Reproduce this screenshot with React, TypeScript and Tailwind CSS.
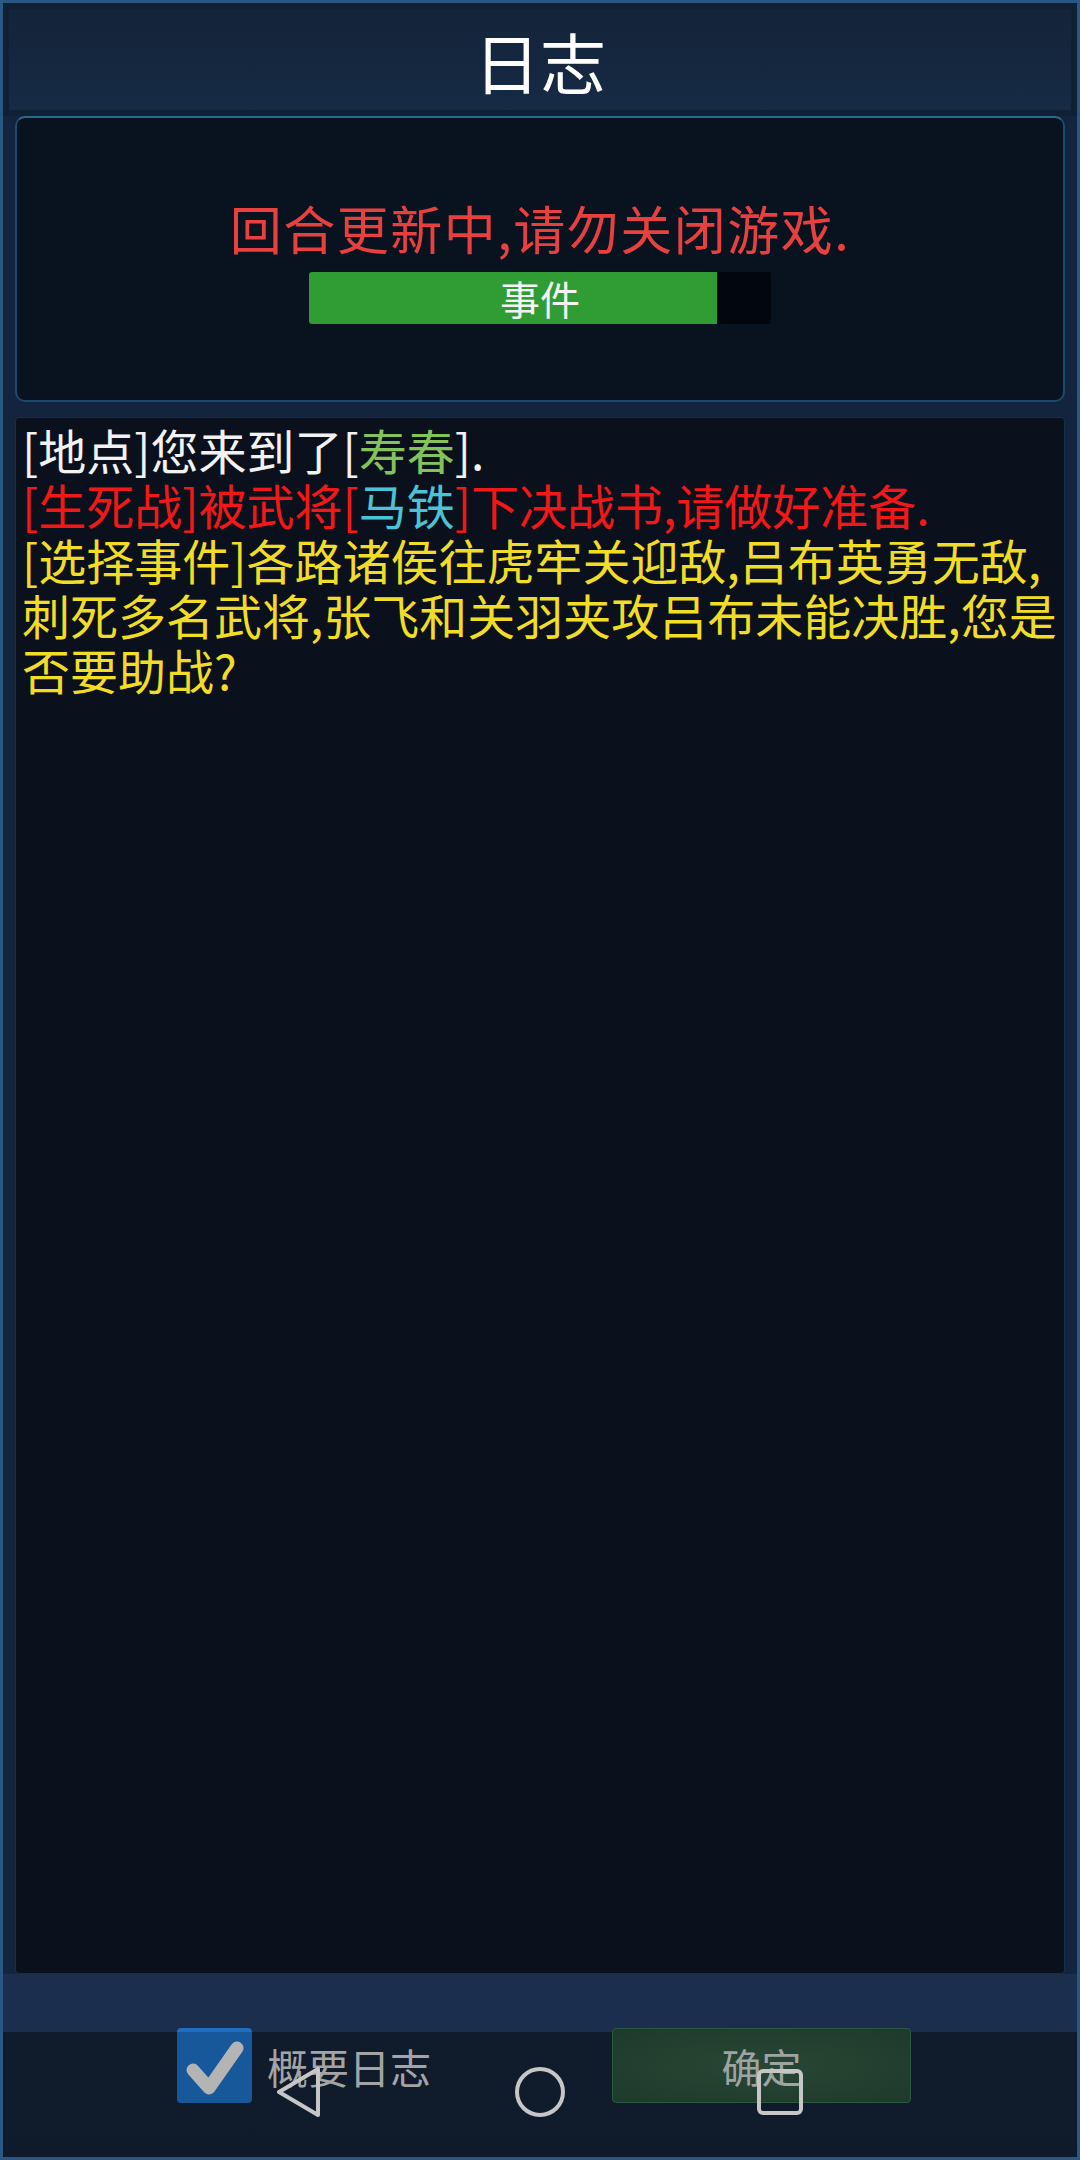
import React from "react";

const FONT = '"Noto Sans CJK SC", "Noto Sans", sans-serif';

export default function App() {
  return (
    <div
      className="relative w-[1080px] h-[2160px] overflow-hidden flex flex-col border-[3px] border-[#2b5883] bg-[#13253e]"
      style={{ fontFamily: FONT }}
    >
      {/* Header */}
      <div className="h-[113px] shrink-0 flex items-center justify-center bg-[linear-gradient(to_bottom,#132339,#172b45)] shadow-[inset_0_0_0_6px_#102035]">
        <span className="text-[66px] leading-none text-white">日志</span>
      </div>

      {/* Top panel */}
      <div className="mx-[12px] h-[286px] shrink-0 rounded-[10px] border-2 border-[#1c4a6c] border-t-[#2a6a8c] bg-[#08131f] flex flex-col items-center pt-[80px]">
        <div className="text-[52px] leading-[60px] tracking-[1.5px] text-[#e8403f]">回合更新中,请勿关闭游戏.</div>
        <div className="relative mt-[14px] w-[462px] h-[52px] bg-[#02070d] rounded-[3px] flex items-center justify-center">
          <div className="absolute left-0 top-0 bottom-0 w-[408px] rounded-l-[3px] bg-[#2f9d33]" />
          <span className="relative text-[40px] leading-[48px] text-[#f4f4f4]">事件</span>
        </div>
      </div>

      {/* Log panel */}
      <div className="mx-[12px] mt-[15px] h-[1557px] shrink-0 rounded-[4px] border border-[#15304a] bg-[#0a111c] pl-[6px] pt-[4px] text-[48px] leading-[55px]">
        <div className="text-[#f2f2f2]">
          [地点]您来到了[<span className="text-[#84c25a]">寿春</span>].
        </div>
        <div className="text-[#f21818]">
          [生死战]被武将[<span className="text-[#4cc2d6]">马铁</span>]下决战书,请做好准备.
        </div>
        <div className="text-[#f1dc26]">
          <div>[选择事件]各路诸侯往虎牢关迎敌,吕布英勇无敌,</div>
          <div>刺死多名武将,张飞和关羽夹攻吕布未能决胜,您是</div>
          <div>否要助战?</div>
        </div>
      </div>

      {/* Bottom controls */}
      <div className="flex-1 bg-[linear-gradient(to_bottom,#1b2e4d_0px,#1b2e4d_58px,#101b2c_58px,#0f1a2a_100%)] pt-[54px] flex items-start">
        <div className="ml-[174px] w-[75px] h-[75px] rounded-[4px] bg-[#17589a] border-t-[4px] border-[#1f6ec2] flex items-center justify-center">
          <svg width="60" height="60" viewBox="0 0 60 60">
            <path
              d="M8 32 L24 50 L52 10"
              fill="none"
              stroke="#b4b4b4"
              strokeWidth="13"
              strokeLinecap="round"
              strokeLinejoin="round"
            />
          </svg>
        </div>
        <span className="ml-[15px] mt-[14px] text-[41px] leading-[48px] text-[#a4a4a4]">概要日志</span>
        <div className="ml-[181px] w-[299px] h-[75px] rounded-[4px] border border-[#2b5a42] bg-[radial-gradient(ellipse_at_center,#294735,#1d3a2a)] flex items-center justify-center">
          <span className="text-[40px] leading-[48px] text-[#9ea4a2]">确定</span>
        </div>
      </div>

      {/* Android nav buttons overlay */}
      <div className="absolute left-0 right-0 bottom-[38px] h-[52px] pointer-events-none">
        <svg width="1080" height="52" viewBox="0 0 1080 52" className="absolute left-[-3px] top-0">
          <path
            d="M318 2 L318 48 L279 25 Z"
            fill="none"
            stroke="#c6c6c6"
            strokeWidth="4"
            strokeLinejoin="round"
          />
          <circle cx="540" cy="25" r="23" fill="none" stroke="#c6c6c6" strokeWidth="4" />
          <rect x="759" y="4" width="42" height="42" rx="4" fill="none" stroke="#c6c6c6" strokeWidth="4" />
        </svg>
      </div>
    </div>
  );
}
